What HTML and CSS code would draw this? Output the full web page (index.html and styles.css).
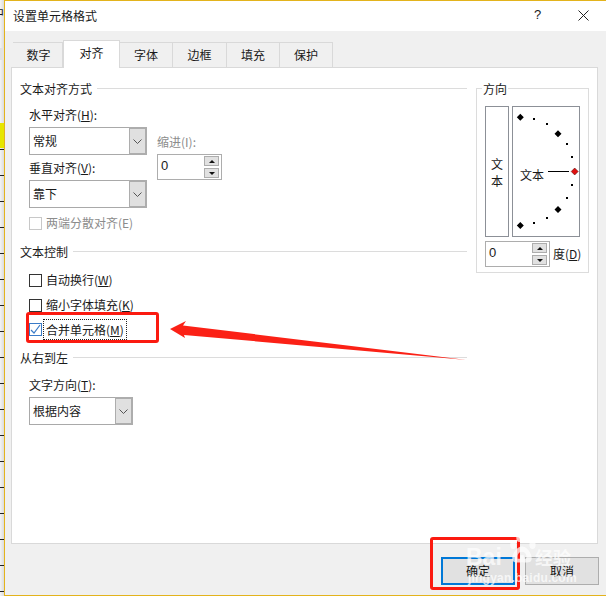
FILE: index.html
```html
<!DOCTYPE html>
<html lang="zh-CN">
<head>
<meta charset="utf-8">
<title>设置单元格格式</title>
<link rel="stylesheet" href="styles.css">
</head>
<body>
<div class="app">
  <div class="sheet-strip"><span class="sheet-char">中</span></div>
  <div class="dialog">
    <header class="titlebar">
      <span class="title">设置单元格格式</span>
      <span class="help">?</span>
      <svg class="close" width="11" height="11" viewBox="0 0 11 11"><path d="M.5.5l10 10M10.5.5l-10 10" stroke="#222" fill="none"/></svg>
    </header>
    <div class="body">
      <div class="tabs">
        <div class="tab t1">数字</div>
        <div class="tab active">对齐</div>
        <div class="tab t3">字体</div>
        <div class="tab t4">边框</div>
        <div class="tab t3">填充</div>
        <div class="tab t3">保护</div>
      </div>
      <div class="panel">
        <div class="left">
          <div class="head"><span>文本对齐方式</span><i class="rule"></i></div>
          <div class="align-row">
            <div class="align-fields">
              <div class="label">水平对齐(<u>H</u>):</div>
              <div class="select wide gap4"><span class="val">常规</span><span class="drop"><svg width="9" height="5" viewBox="0 0 9 5"><path d="M.5.5l4 4 4-4" fill="none" stroke="#555"/></svg></span></div>
              <div class="label gap5">垂直对齐(<u>V</u>):</div>
              <div class="select wide gap4"><span class="val">靠下</span><span class="drop"><svg width="9" height="5" viewBox="0 0 9 5"><path d="M.5.5l4 4 4-4" fill="none" stroke="#555"/></svg></span></div>
            </div>
            <div class="indent">
              <div class="label muted">缩进(I):</div>
              <div class="spin gap4"><span class="num">0</span><span class="arrows"><b class="up"></b><b class="down"></b></span></div>
            </div>
          </div>
          <label class="check-row muted gap7"><span class="box disabled"></span><span>两端分散对齐(E)</span></label>
          <div class="head gap13"><span>文本控制</span><i class="rule"></i></div>
          <label class="check-row gap12"><span class="box"></span><span>自动换行(<u>W</u>)</span></label>
          <label class="check-row gap9"><span class="box"></span><span>缩小字体填充(<u>K</u>)</span></label>
          <label class="check-row gap8"><span class="box checked"><svg width="11" height="11" viewBox="0 0 11 11"><path d="M1 6l3 3 6-8" fill="none" stroke="#3a7bc8" stroke-width="1.2"/></svg></span><span class="focus">合并单元格(<u>M</u>)</span></label>
          <div class="head gap13"><span>从右到左</span><i class="rule"></i></div>
          <div class="label gap11">文字方向(<u>T</u>):</div>
          <div class="select narrow gap4"><span class="val">根据内容</span><span class="drop"><svg width="9" height="5" viewBox="0 0 9 5"><path d="M.5.5l4 4 4-4" fill="none" stroke="#555"/></svg></span></div>
        </div>
        <section class="orient">
          <span class="legend">方向</span>
          <div class="orient-row">
            <div class="vtext"><span>文</span><span>本</span></div>
            <svg class="dial" width="68" height="131" viewBox="0 0 68 131">
              <rect x=".5" y=".5" width="67" height="130" fill="#fff" stroke="#8c9097"/>
              <g fill="#000">
                <path d="M8.300 7.800l3.500 3.500-3.500 3.500-3.500-3.500zM46 24.200l3.500 3.500-3.500 3.500-3.500-3.500zM46 100l3.500 3.500-3.500 3.500-3.500-3.500zM8.300 116l3.500 3.500-3.500 3.500-3.500-3.500z"/>
                <rect x="21" y="12" width="2" height="2"/><rect x="34" y="17" width="2" height="2"/><rect x="54" y="37" width="2" height="2"/><rect x="59" y="50" width="2" height="2"/>
                <rect x="59" y="78" width="2" height="2"/><rect x="54" y="91" width="2" height="2"/><rect x="34" y="111" width="2" height="2"/><rect x="21" y="116" width="2" height="2"/>
                <rect x="36" y="65" width="21" height="1"/>
              </g>
              <path d="M62.700 62l3.500 3.500-3.500 3.500-3.500-3.500z" fill="#e01010" stroke="#400" stroke-width=".5"/>
              <text class="dial-text" x="8" y="74">文本</text>
            </svg>
          </div>
          <div class="degree-row">
            <div class="spin"><span class="num">0</span><span class="arrows"><b class="up"></b><b class="down"></b></span></div>
            <span class="deg">度(<u>D</u>)</span>
          </div>
        </section>
      </div>
      <div class="actions">
        <button class="btn default">确定</button>
        <button class="btn">取消</button>
      </div>
    </div>
  </div>
</div>
<div class="mark-rect one"></div>
<div class="mark-rect two"></div>
<svg class="arrow" width="606" height="596" viewBox="0 0 606 596"><path d="M170 329l16-8-3 4.500 284 34.500-283-25 1 3z" fill="#fb2116"/></svg>
<div class="watermark">
  <svg class="paw" width="28" height="32" viewBox="0 0 32 36"><g fill="#fff"><ellipse cx="6" cy="13" rx="3.500" ry="5"/><ellipse cx="13" cy="5" rx="3.500" ry="5"/><ellipse cx="21" cy="5" rx="3.500" ry="5"/><ellipse cx="28" cy="13" rx="3.500" ry="5"/><path d="M16 15c6 0 12 9 11 15-1 5-7 3-11 3s-10 2-11-3c-1-6 5-15 11-15zm0 6a5 5 0 0 0-5 5v3h3v-4h4v4h3v-3a5 5 0 0 0-5-5z" fill-rule="evenodd"/></g></svg>
  <span class="wm-bai">Bai</span><span class="wm-jy">经验</span>
  <span class="wm-url">jingyan.baidu.com</span>
</div>
</body>
</html>
```
FILE: styles.css
```css
* { box-sizing: border-box; }
html, body { margin: 0; height: 100%; overflow: hidden; }
body {
  width: 606px; height: 596px; position: relative; background: #fff; color: #1a1a1a;
  font: 12px/16px "Noto Sans CJK SC", "Liberation Sans", sans-serif;
}
u { text-decoration: underline; }
.app { display: flex; width: 606px; height: 596px; }
.sheet-strip {
  width: 4px; flex: none; overflow: hidden; position: relative;
  background:
    linear-gradient(#e6e600, #e6e600) 0 123px / 4px 25px no-repeat,
    linear-gradient(#e2e2e2, #e2e2e2) 0 48px / 4px 12px no-repeat,
    repeating-linear-gradient(transparent 0 25px, #222 25px 26px) 0 124px / 4px 472px no-repeat,
    linear-gradient(90deg, #f4f4f4, #dcdcdc);
}
.sheet-char { display: block; margin: 5px 0 0 -8px; line-height: 16px; font-size: 12px; }
.dialog {
  flex: 1; display: flex; flex-direction: column; min-width: 0;
  border: solid #e3b31c; border-width: 1px 0 1px 1px; background: #f0f0f0;
}
.titlebar { height: 30px; flex: none; background: #fff; display: flex; align-items: center; padding-left: 8px; }
.title { flex: 1; padding-bottom: 1px; }
.help { margin-right: 37px; font: 13px/16px "Liberation Sans", sans-serif; width: 7px; padding-bottom: 2px; }
.close { margin-right: 17px; margin-bottom: 2px; }
.body { flex: 1; display: flex; flex-direction: column; padding: 9px 8px 0 6px; }
.tabs { display: flex; align-items: flex-end; height: 27px; padding-left: 2px; position: relative; z-index: 1; }
.tab {
  height: 25px; display: flex; align-items: center; justify-content: center; padding-bottom: 1px;
  border: 1px solid #d9d9d9; border-width: 1px 1px 0 0; background: #f0f0f0; width: 53px;
}
.t1 { width: 50px; border-left: 0; padding-left: 2px; }
.t4 { width: 54px; }
.active {
  height: 28px; width: 57px; margin-bottom: -1px; background: #fff; border-width: 1px 1px 0 1px; padding-bottom: 3px;
}
.panel {
  height: 477px; background: #fff; border: 1px solid #d9d9d9; display: flex; padding: 13px 0 0 8px; gap: 9px;
}
.left { width: 447px; flex: none; }
.head { height: 16px; display: flex; align-items: center; gap: 5px; }
.rule { flex: 1; height: 1px; background: #dcdcdc; margin-top: -2px; }
.align-row { display: flex; padding-left: 9px; margin-top: 10px; }
.align-fields { width: 118px; flex: none; }
.indent { margin-left: 10px; padding-top: 27px; }
.label { height: 16px; }
.left > .label { margin-left: 9px; }
.label.muted { color: #8c8c8c; }
.gap4 { margin-top: 4px; }
.gap5 { margin-top: 5px; }
.gap7 { margin-top: 7px; }
.gap8 { margin-top: 8px; }
.gap9 { margin-top: 9px; }
.gap11 { margin-top: 11px; }
.gap12 { margin-top: 12px; }
.gap13 { margin-top: 13px; }
.select {
  height: 28px; display: flex; border: 1px solid #a9a9a9; background: #fff;
}
.wide { width: 118px; }
.narrow { width: 104px; margin-left: 9px; }
.val { flex: 1; padding: 5px 0 0 3px; }
.drop {
  width: 18px; background: #e0e0e0; border: solid #adadad; margin: -1px -1px -1px 0;
  border-width: 2px 2px 2px 1px; display: flex; align-items: center; justify-content: center;
}
.spin { width: 65px; height: 26px; border: 1px solid #adadad; background: #fff; display: flex; }
.num { flex: 1; padding: 3px 0 0 3px; font: 13px/16px "Liberation Sans", sans-serif; }
.arrows { width: 15px; margin: 1px 2px 1px 0; display: flex; flex-direction: column; gap: 2px; }
.arrows b { flex: 1; background: #e1e1e1; border: 1px solid #adadad; display: flex; align-items: center; justify-content: center; }
.arrows b::after { content: ""; border: 3px solid transparent; }
.up::after { border-bottom-color: #111 !important; border-top-width: 0 !important; }
.down::after { border-top-color: #111 !important; border-bottom-width: 0 !important; }
.check-row { display: flex; align-items: center; height: 16px; margin-left: 9px; gap: 4px; position: relative; }
.check-row.muted { color: #8c8c8c; }
.box { width: 13px; height: 13px; border: 1px solid #333; background: #fff; flex: none; display: flex; align-items: center; justify-content: center; }
.box.disabled { border-color: #c8c8c8; }
.box.checked { border-color: #3a7bc8; }
.focus { outline: 1px dotted #222; padding: 1px 2px; margin-left: -2px; height: 19px; line-height: 17px; }
.orient { width: 113px; height: 185px; margin-top: 7px; border: 1px solid #dcdcdc; position: relative; padding: 17px 0 0 8px; flex: none; }
.legend { position: absolute; left: 5px; top: -8px; background: #fff; padding: 0 1px; }
.orient-row { display: flex; gap: 3px; }
.vtext {
  width: 24px; height: 131px; border: 1px solid #8c9097; display: flex; flex-direction: column; align-items: center; justify-content: center; line-height: 17px;
}
.dial { display: block; flex: none; }
.dial-text { font: 12px "Noto Sans CJK SC", sans-serif; fill: #1a1a1a; }
.degree-row { display: flex; align-items: center; margin-top: 4px; gap: 3px; }
.deg { white-space: nowrap; }
.actions { display: flex; gap: 10px; padding: 13px 0 0 430px; }
.btn {
  width: 74px; height: 28px; border: 1px solid #adadad; background: #e1e1e1; color: #111; font: inherit; padding: 0; flex: none;
}
.default { border: 2px solid #0078d7; }
.mark-rect { position: absolute; border: 3px solid #fb1a10; border-radius: 3px; }
.mark-rect.one { left: 26px; top: 312px; width: 133px; height: 31px; }
.mark-rect.two { left: 430px; top: 537px; width: 90px; height: 53px; }
.arrow { position: absolute; left: 0; top: 0; pointer-events: none; }
.watermark { position: absolute; left: 465px; top: 533px; width: 110px; height: 52px; color: #fff; opacity: .72; pointer-events: none; }
.paw { position: absolute; left: 43px; top: 0; }
.wm-bai { position: absolute; left: 1px; top: 12px; font: 700 23px/24px "Liberation Sans", sans-serif; }
.wm-jy { position: absolute; left: 70px; top: 13px; font: 700 18px/22px "Noto Sans CJK SC", sans-serif; }
.wm-url { position: absolute; left: 3px; top: 38px; font: 700 12px/14px "Liberation Sans", sans-serif; letter-spacing: .2px; }
```
